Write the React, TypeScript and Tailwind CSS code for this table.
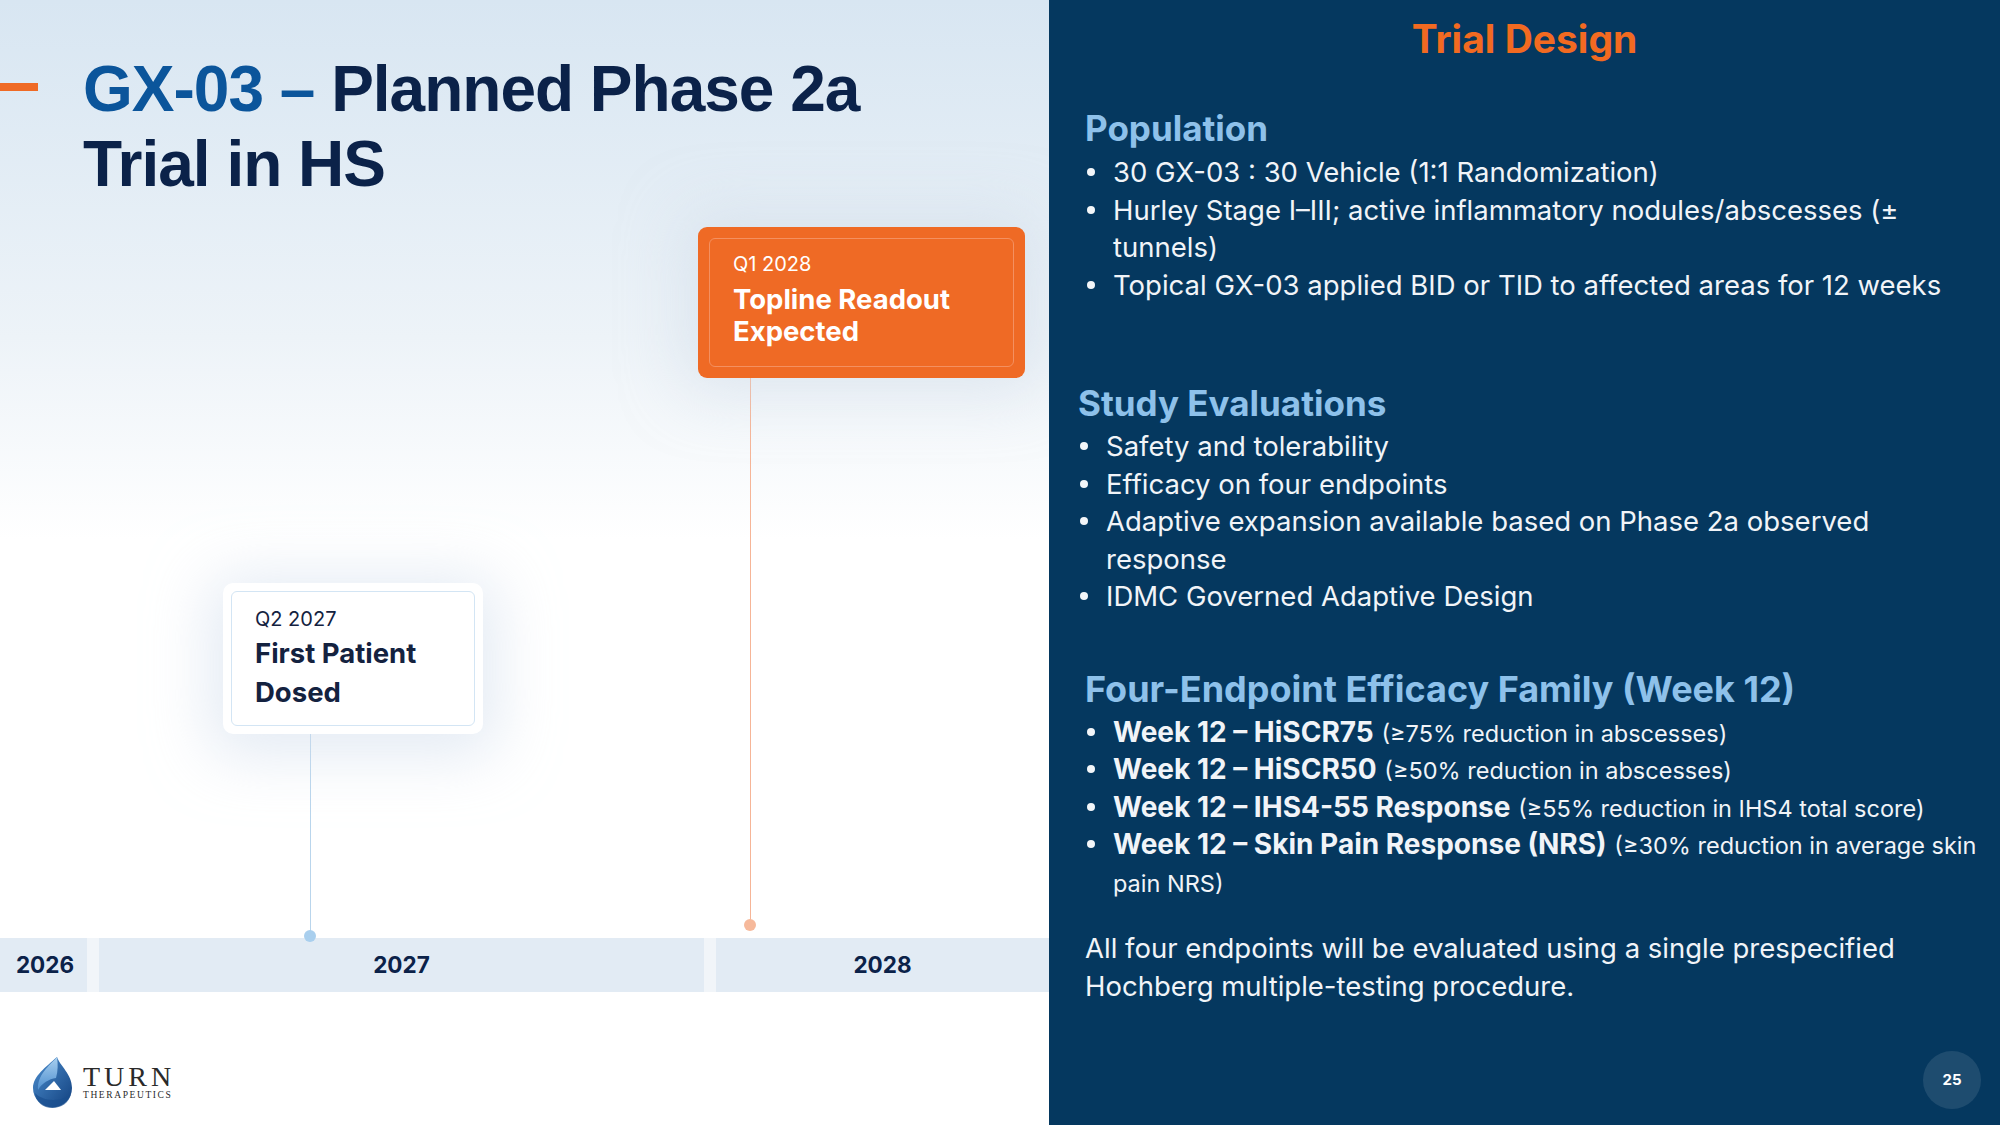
const sans = "font-['Inter','Lato',sans-serif]";

function Bullet({ children }: { children: React.ReactNode }) {
  return (
    <li className="flex">
      <span className="w-[28px] shrink-0">
        <span className="mt-[14px] ml-[2px] block h-[8px] w-[8px] rounded-full bg-[#f3f6f9]" />
      </span>
      <span>{children}</span>
    </li>
  );
}

function Endpoint({ name, note }: { name: string; note: React.ReactNode }) {
  return (
    <Bullet>
      <b className="text-[28px]">{name}</b> <span className="text-[23.5px] leading-[20px]">{note}</span>
    </Bullet>
  );
}

function Logo() {
  return (
    <div className="ml-[32px] mt-[65px] flex items-start">
      <svg width="41" height="51" viewBox="0 0 41 51">
        <defs>
          <linearGradient id="dropA" x1="0" y1="0" x2="1" y2="1">
            <stop offset="0" stopColor="#4d8fd0" />
            <stop offset="1" stopColor="#12417f" />
          </linearGradient>
          <linearGradient id="dropB" x1="0" y1="0" x2="0" y2="1">
            <stop offset="0" stopColor="#a9d0f0" />
            <stop offset="1" stopColor="#4f8fcf" />
          </linearGradient>
        </defs>
        <path d="M25 0 C28 9 40 17 40 31 A19.5 19.5 0 1 1 1 31 C1 19 14 10 25 0 Z" fill="url(#dropA)" />
        <path d="M25 0 C17 9 5 18 6 33 C10 26 17 22 24 21 C26 14 26 7 25 0 Z" fill="url(#dropB)" />
        <path d="M3 36 C10 44 28 46 39 37 C37 46 29 51 20.5 51 C11 51 4 45 3 36 Z" fill="#1a4e8f" opacity="0.7" />
        <path d="M22 24 L29 33 L13 33 Z" fill="#ffffff" />
      </svg>
      <div className="ml-[10px] flex flex-col font-['Liberation_Serif',serif] text-[#2a2a2a]">
        <span className="mt-[6px] text-[28px] leading-[28px] tracking-[4px]">TURN</span>
        <span className="mt-[-1px] text-[9.5px] leading-[10px] tracking-[1.6px]">THERAPEUTICS</span>
      </div>
    </div>
  );
}

export default function App() {
  return (
    <div className={`flex h-[1125px] w-[2000px] overflow-hidden ${sans}`}>
      {/* left: title + timeline */}
      <div className="relative flex w-[1049px] shrink-0 flex-col bg-linear-to-b from-[#d8e6f2] from-0% via-[#edf3f8] via-30% to-white to-48%">
        <div className="flex items-start pt-[52px]">
          <div className="mt-[31px] h-[8px] w-[38px] bg-[#ef6a25]" />
          <h1 className="ml-[45px] font-['Liberation_Sans',Arial,sans-serif] text-[64px] font-bold leading-[75px] tracking-[-1px] text-[#0b2249]">
            <span className="text-[#0b559b]">GX-03 –</span> Planned Phase 2a
            <br />
            Trial in HS
          </h1>
        </div>

        <div className="relative h-[736px]">
          <div className="absolute left-[750px] top-[176px] h-[547px] w-px bg-[#f6b597]" />
          <div className="absolute left-[744px] top-[717px] h-[12px] w-[12px] rounded-full bg-[#f6b99b]" />
          <div className="absolute left-[310px] top-[532px] h-[202px] w-px bg-[#b9d5ec]" />
          <div className="absolute left-[304px] top-[728px] h-[12px] w-[12px] rounded-full bg-[#a9cfee]" />

          <div className="absolute left-[698px] top-[25px] w-[327px] rounded-[9px] bg-[#ef6a25] p-[11px] shadow-[0_0_60px_14px_rgba(205,218,232,0.5)]">
            <div className="rounded-[6px] border border-[#f49060] pb-[19px] pl-[23px] pt-[13px] text-white">
              <div className="text-[20px] leading-[24px]">Q1 2028</div>
              <div className="mt-[7px] text-[27.5px] font-bold leading-[32px]">
                Topline Readout
                <br />
                Expected
              </div>
            </div>
          </div>

          <div className="absolute left-[223px] top-[381px] w-[260px] rounded-[10px] bg-white p-[8px] shadow-[0_8px_60px_14px_rgba(210,222,236,0.6)]">
            <div className="rounded-[6px] border border-[#d3e5f4] pb-[13px] pl-[23px] pt-[15px] text-[#14223f]">
              <div className="text-[20px] leading-[24px]">Q2 2027</div>
              <div className="mt-[3px] text-[27.5px] font-bold leading-[39px]">
                First Patient
                <br />
                Dosed
              </div>
            </div>
          </div>
        </div>

        <div className="flex h-[54px] gap-[12px] bg-[#f1f5f9] text-[22.5px] font-bold text-[#0b2249]">
          <div className="flex w-[87px] items-center justify-center bg-[#e2ebf4] pl-[3px]">2026</div>
          <div className="flex w-[605px] items-center justify-center bg-[#e2ebf4]">2027</div>
          <div className="flex flex-1 items-center justify-center bg-[#e2ebf4]">2028</div>
        </div>

        <Logo />
      </div>

      {/* right: trial design */}
      <div className="relative flex flex-1 flex-col bg-[#05385f] pl-[36px] pr-[20px] pt-[15px] text-[#f1f4f8]">
        <h2 className="-ml-[36px] -mr-[20px] text-center text-[39px] font-bold leading-[48px] text-[#f26a21]">Trial Design</h2>

        <section className="mt-[43px]">
          <h3 className="text-[35px] font-bold leading-[44px] text-[#8ec1ea]">Population</h3>
          <ul className="mt-[4px] text-[27.5px] leading-[37.5px]">
            <Bullet>30 GX-03 : 30 Vehicle (1:1 Randomization)</Bullet>
            <Bullet>
              Hurley Stage I–III; active inflammatory nodules/abscesses (±
              <br />
              tunnels)
            </Bullet>
            <Bullet>Topical GX-03 applied BID or TID to affected areas for 12 weeks</Bullet>
          </ul>
        </section>

        <section className="ml-[-7px] mt-[77px]">
          <h3 className="text-[35px] font-bold leading-[44px] text-[#8ec1ea]">Study Evaluations</h3>
          <ul className="mt-[3px] text-[27.5px] leading-[37.5px]">
            <Bullet>Safety and tolerability</Bullet>
            <Bullet>Efficacy on four endpoints</Bullet>
            <Bullet>
              Adaptive expansion available based on Phase 2a observed
              <br />
              response
            </Bullet>
            <Bullet>IDMC Governed Adaptive Design</Bullet>
          </ul>
        </section>

        <section className="mt-[51px]">
          <h3 className="text-[36px] font-bold leading-[44px] text-[#8ec1ea]">Four-Endpoint Efficacy Family (Week 12)</h3>
          <ul className="mt-[3px] text-[27.5px] leading-[37.5px]">
            <Endpoint name="Week 12 – HiSCR75" note="(≥75% reduction in abscesses)" />
            <Endpoint name="Week 12 – HiSCR50" note="(≥50% reduction in abscesses)" />
            <Endpoint name="Week 12 – IHS4-55 Response" note="(≥55% reduction in IHS4 total score)" />
            <Endpoint
              name="Week 12 – Skin Pain Response (NRS)"
              note={
                <>
                  (≥30% reduction in average skin
                  <br />
                  pain NRS)
                </>
              }
            />
          </ul>
        </section>

        <p className="mt-[28px] text-[27.5px] leading-[38px]">
          All four endpoints will be evaluated using a single prespecified
          <br />
          Hochberg multiple-testing procedure.
        </p>

        <div className="absolute bottom-[16px] right-[19px] flex h-[58px] w-[58px] items-center justify-center rounded-full bg-white/10 text-[15px] font-bold text-white">
          25
        </div>
      </div>
    </div>
  );
}
